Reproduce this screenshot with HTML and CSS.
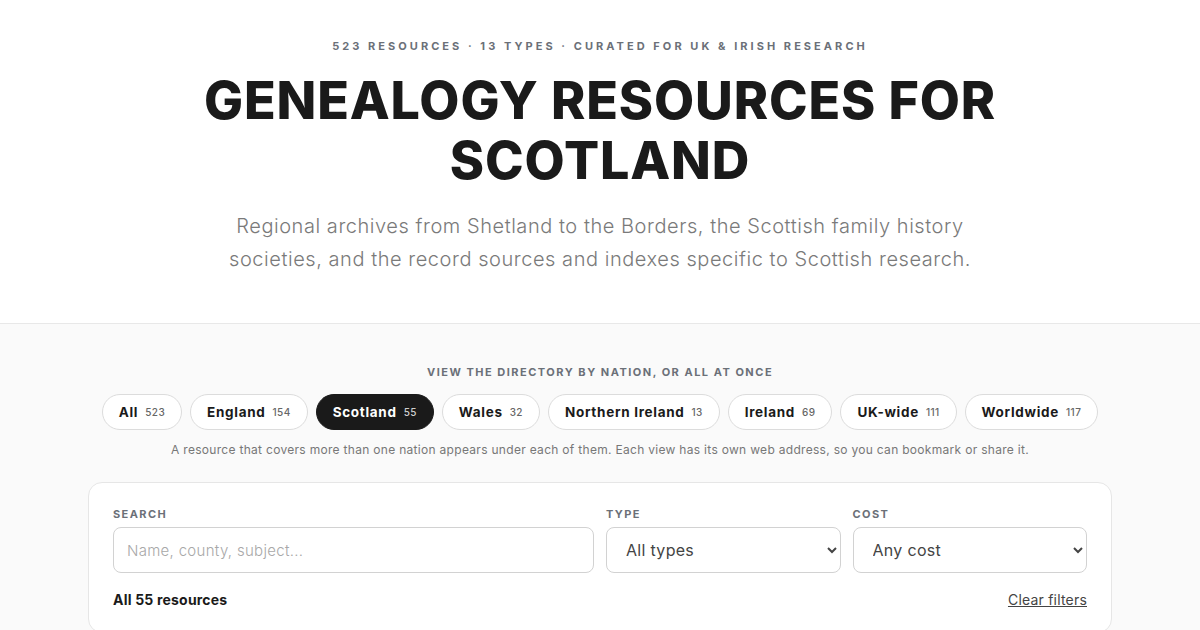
FILE: index.html
```html
<!DOCTYPE html>
<html lang="en">
<head>
<meta charset="utf-8">
<title>Genealogy Resources for Scotland</title>
<link rel="stylesheet" href="styles.css">
</head>
<body>
<header class="hero">
  <p class="eyebrow">523 resources · 13 types · curated for UK &amp; Irish research</p>
  <h1 class="title">Genealogy Resources for<br>Scotland</h1>
  <p class="lede">Regional archives from Shetland to the Borders, the Scottish family history societies, and the record sources and indexes specific to Scottish research.</p>
</header>
<main class="directory">
  <p class="section-label">View the directory by nation, or all at once</p>
  <nav class="pills">
    <a class="pill" href="#">All <span class="count">523</span></a>
    <a class="pill" href="#">England <span class="count">154</span></a>
    <a class="pill active" href="#">Scotland <span class="count">55</span></a>
    <a class="pill" href="#">Wales <span class="count">32</span></a>
    <a class="pill" href="#">Northern Ireland <span class="count">13</span></a>
    <a class="pill" href="#">Ireland <span class="count">69</span></a>
    <a class="pill" href="#">UK-wide <span class="count">111</span></a>
    <a class="pill" href="#">Worldwide <span class="count">117</span></a>
  </nav>
  <p class="note">A resource that covers more than one nation appears under each of them. Each view has its own web address, so you can bookmark or share it.</p>
  <section class="card">
    <div class="filters">
      <label class="field">
        <span class="field-label">Search</span>
        <input class="control" type="text" placeholder="Name, county, subject...">
      </label>
      <label class="field">
        <span class="field-label">Type</span>
        <select class="control select"><option>All types</option></select>
      </label>
      <label class="field">
        <span class="field-label">Cost</span>
        <select class="control select"><option>Any cost</option></select>
      </label>
    </div>
    <div class="summary">
      <span class="total">All 55 resources</span>
      <a class="clear" href="#">Clear filters</a>
    </div>
  </section>
</main>
</body>
</html>
```

FILE: styles.css
```css
* { box-sizing: border-box; }
html, body { margin: 0; padding: 0; }
body {
  font-family: Inter, "Noto Sans", "Liberation Sans", sans-serif;
  color: #1a1a1a;
  background: #fafafa;
}
.hero {
  background: #ffffff;
  border-bottom: 1px solid #e8e8e8;
  text-align: center;
  padding: 39px 20px 47px;
}
.eyebrow {
  margin: 0;
  font-size: 11px;
  font-weight: 700;
  letter-spacing: 3.05px;
  text-transform: uppercase;
  color: #6b7078;
}
.title {
  margin: 18px 0 0;
  font-size: 52px;
  line-height: 60px;
  font-weight: 800;
  letter-spacing: 0.85px;
  text-transform: uppercase;
  color: #1a1a1a;
}
.lede {
  margin: 19px auto 0;
  max-width: 760px;
  font-size: 20px;
  line-height: 33px;
  font-weight: 300;
  letter-spacing: 0.55px;
  color: #7a7a7a;
}
.directory {
  padding: 41px 88px 0;
}
.section-label {
  margin: 0;
  text-align: center;
  font-size: 11px;
  font-weight: 700;
  letter-spacing: 1.5px;
  text-transform: uppercase;
  color: #6b7078;
}
.pills {
  margin-top: 15px;
  display: flex;
  justify-content: center;
  gap: 8px;
}
.pill {
  display: inline-flex;
  align-items: center;
  gap: 7px;
  height: 36px;
  padding: 0 16px;
  border: 1px solid #dcdcdc;
  border-radius: 999px;
  background: #ffffff;
  color: #1a1a1a;
  font-size: 13.5px;
  font-weight: 700;
  letter-spacing: 0.7px;
  text-decoration: none;
}
.pill .count {
  font-size: 10px;
  font-weight: 500;
  color: #666;
  letter-spacing: 0.4px;
}
.pill.active {
  background: #1a1a1a;
  border-color: #1a1a1a;
  color: #ffffff;
}
.pill.active .count { color: #cfcfcf; }
.note {
  margin: 12px 0 0;
  text-align: center;
  font-size: 12px;
  letter-spacing: 0.3px;
  color: #777;
}
.card {
  margin-top: 25px;
  background: #ffffff;
  border: 1px solid #e6e6e6;
  border-radius: 14px;
  padding: 24px 24px 24px;
}
.filters {
  display: grid;
  grid-template-columns: 481px 1fr 1fr;
  gap: 12px;
}
.field {
  display: flex;
  flex-direction: column;
  gap: 6px;
}
.field-label {
  font-size: 11px;
  font-weight: 700;
  letter-spacing: 1.4px;
  text-transform: uppercase;
  color: #6b7078;
}
.control {
  height: 46px;
  border: 1px solid #d2d2d2;
  border-radius: 8px;
  background: #ffffff;
  padding: 0 13px;
  font-family: inherit;
  font-size: 15px;
  letter-spacing: 0.3px;
  color: #444;
}
.control::placeholder { color: #a8a8a8; font-weight: 300; }
.select { padding: 0 12px 0 15px; font-size: 16px; }
.summary {
  margin-top: 18px;
  display: flex;
  justify-content: space-between;
  align-items: center;
}
.total {
  font-size: 14px;
  font-weight: 700;
  letter-spacing: 0.2px;
}
.clear {
  font-size: 14px;
  color: #444;
  letter-spacing: 0.2px;
  text-decoration: underline;
}
```
